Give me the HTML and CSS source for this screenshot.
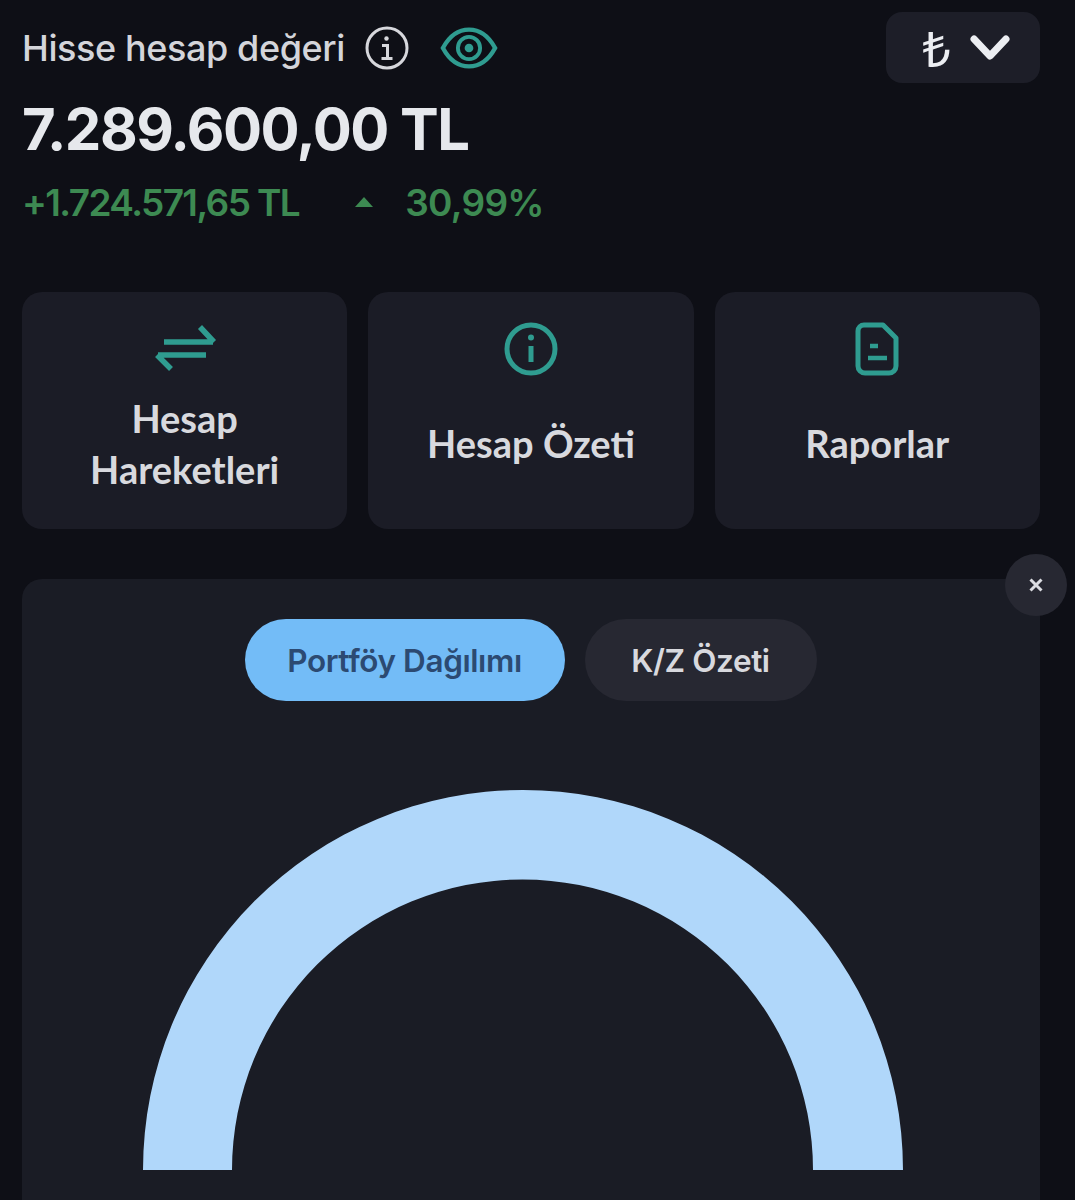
FILE: index.html
```html
<!DOCTYPE html>
<html lang="tr">
<head>
<meta charset="utf-8">
<title>Hisse hesap değeri</title>
<link rel="stylesheet" href="styles.css">
</head>
<body>
<main class="page">
  <header class="head">
    <div class="head-main">
      <div class="label-row">
        <span class="label">Hisse hesap değeri</span>
        <svg class="info-icon" viewBox="0 0 44 44" fill="none" stroke="#d6d7dc"><circle cx="22" cy="22" r="20" stroke-width="3"/><path d="M17 19.500h5.500V32M16.500 32.500h11" stroke-width="3"/><circle cx="21.500" cy="12.500" r="2.200" fill="#d6d7dc" stroke="none"/></svg>
        <svg class="eye-icon" viewBox="0 0 60 44" fill="none" stroke="#2f9c90"><path d="M3 22C10 9 20 3 30 3s20 6 27 19c-7 13-17 19-27 19S10 35 3 22Z" stroke-width="4.500"/><circle cx="30" cy="22" r="11.500" stroke-width="4"/><circle cx="30" cy="22" r="4.500" fill="#2f9c90" stroke="none"/></svg>
      </div>
      <div class="total">7.289.600,00 TL</div>
      <div class="change">
        <span class="change-amount">+1.724.571,65 TL</span>
        <svg class="up-icon" viewBox="0 0 20 12"><path d="M10 1 19 11H1Z" fill="#3d8a52"/></svg>
        <span class="change-percent">30,99%</span>
      </div>
    </div>
    <button class="currency">
      <span class="lira">₺</span>
      <svg class="chevron" viewBox="0 0 42 28" fill="none" stroke="#eceef2" stroke-width="7" stroke-linecap="round" stroke-linejoin="round"><path d="M5 5 21 22 37 5"/></svg>
    </button>
  </header>

  <section class="actions">
    <a class="action">
      <svg class="action-icon" viewBox="0 0 64 54" fill="none" stroke="#2f9c90" stroke-width="5.500"><path d="M11 20H60M47 5 61 20M53 33H5M4 33 18 47"/></svg>
      <span class="action-text">Hesap<br>Hareketleri</span>
    </a>
    <a class="action">
      <svg class="action-icon" viewBox="0 0 54 54" fill="none" stroke="#2f9c90"><circle cx="27" cy="27" r="24" stroke-width="5"/><path d="M27 24V40" stroke-width="5"/><circle cx="27" cy="15.500" r="3" fill="#2f9c90" stroke="none"/></svg>
      <span class="action-text">Hesap Özeti</span>
    </a>
    <a class="action">
      <svg class="action-icon" viewBox="0 0 44 54" fill="none" stroke="#2f9c90" stroke-width="5"><path d="M9 3H28L41 16V44a7 7 0 0 1-7 7H10a7 7 0 0 1-7-7V9a6 6 0 0 1 6-6Z" stroke-linejoin="round"/><path d="M15 24H23M13 36H32" stroke-width="4.500"/></svg>
      <span class="action-text">Raporlar</span>
    </a>
  </section>

  <section class="panel">
    <button class="close" aria-label="Kapat"><svg viewBox="0 0 16 16" fill="none" stroke="#dcdde2" stroke-width="3"><path d="M2.500 2.500 13.500 13.500M13.500 2.500 2.500 13.500"/></svg></button>
    <div class="tabs">
      <button class="tab tab-active">Portföy Dağılımı</button>
      <button class="tab">K/Z Özeti</button>
    </div>
    <svg class="gauge" viewBox="0 0 760 380"><path d="M0 380A380 380 0 0 1 760 380H670A290 290 0 0 0 89 380Z" fill="#b0d7fa"/></svg>
  </section>
</main>
</body>
</html>
```
FILE: styles.css
```css
* { box-sizing: border-box; }
html, body { margin: 0; height: 1200px; overflow: hidden; background: #0e0f16; }
body { font-family: "Lato", "Inter", "Liberation Sans", sans-serif; color: #d8d9de; }
button { font: inherit; border: 0; padding: 0; }

.page { padding: 12px 35px 0 22px; height: 1200px; overflow: hidden; }

.head { display: flex; justify-content: space-between; align-items: flex-start; }
.head-main { display: flex; flex-direction: column; }
.label-row { display: flex; align-items: center; height: 71px; }
.label { font-family: "Inter", sans-serif; font-size: 36px; font-weight: 500; letter-spacing: -0.4px; color: #d4d5da; white-space: nowrap; }
.info-icon { width: 44px; height: 44px; margin-left: 20px; }
.eye-icon { width: 58px; height: 44px; margin-left: 31px; }
.total { margin-top: 11px; font-family: "Inter", sans-serif; font-size: 58px; font-weight: 700; line-height: 70px; letter-spacing: -1.5px; color: #e6e8ec; white-space: nowrap; }
.change { display: flex; align-items: center; height: 50px; margin-top: 13px; font-family: "Inter", sans-serif; font-size: 37px; font-weight: 600; color: #3d8a52; white-space: nowrap; }
.change-amount { letter-spacing: -1.6px; }
.change-percent { letter-spacing: -0.7px; }
.up-icon { width: 20px; height: 12px; margin: 0 31px 0 55px; }

.currency { display: flex; align-items: center; justify-content: center; gap: 18px; width: 154px; height: 71px; padding-left: 7px; border-radius: 16px; background: #1d1e28; color: #eceef2; }
.lira { font-family: "Noto Sans", "DejaVu Sans", sans-serif; font-size: 50px; line-height: 1; }
.chevron { width: 42px; height: 28px; }

.actions { display: grid; grid-template-columns: repeat(3, 1fr); gap: 21px; margin-top: 65px; }
.action { display: flex; flex-direction: column; align-items: center; height: 237px; padding-top: 30px; border-radius: 20px; background: #1b1c26; text-align: center; }
.action-icon { height: 54px; width: 64px; flex: none; }
.action-text { display: flex; align-items: center; flex: 1; padding-bottom: 18px; font-size: 38px; line-height: 51px; font-weight: 700; color: #d8d9de; }

.panel { position: relative; height: 621px; margin-top: 50px; padding-top: 40px; border-radius: 20px 20px 0 0; background: #1a1c25; }
.close { position: absolute; top: -25px; right: -27px; display: flex; align-items: center; justify-content: center; width: 62px; height: 62px; border-radius: 50%; background: #272832; }
.close svg { width: 16px; height: 16px; }
.tabs { display: flex; justify-content: center; gap: 20px; padding-right: 1px; }
.tab { height: 82px; border-radius: 41px; font-family: "Inter", sans-serif; font-size: 31.500px; font-weight: 600; letter-spacing: -0.4px; white-space: nowrap; background: #272832; color: #d8d9de; width: 232px; }
.tab-active { width: 320px; background: #73bcf7; color: #2c4a72; }
.gauge { display: block; width: 760px; height: 380px; margin: 89px 0 0 121px; }
```
